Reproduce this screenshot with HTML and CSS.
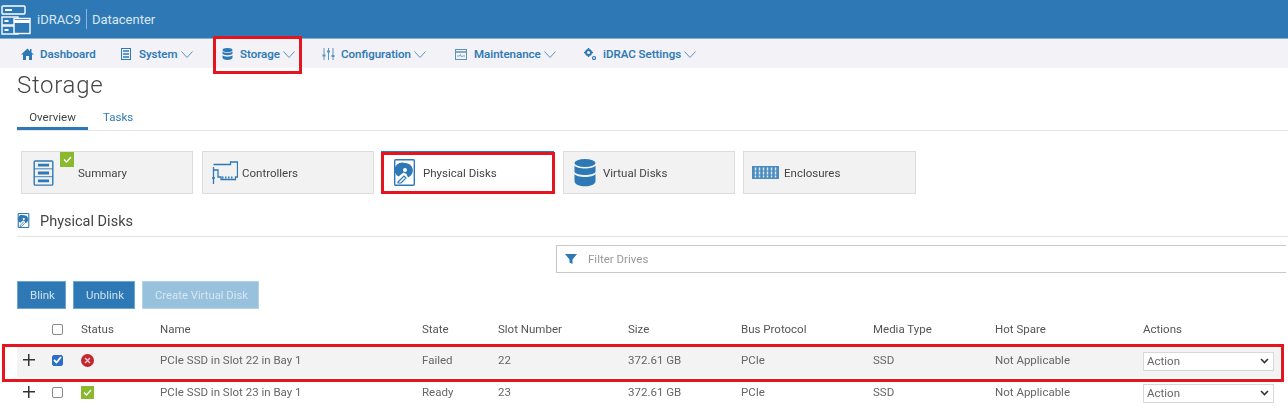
FILE: index.html
```html
<!DOCTYPE html>
<html>
<head>
    <title>Storage - iDRAC9</title>
    <link rel="stylesheet" href="styles.css">
</head>
<body>
    <header class="topbar">
        <svg class="logo" width="32" height="34" viewBox="0 0 32 34" fill="none" stroke="#fff" stroke-width="1.4">
            <rect x="2" y="4" width="23" height="8" rx="1"/>
            <rect x="2" y="15" width="16" height="8"/>
            <rect x="2" y="24" width="16" height="8"/>
            <rect x="14" y="16.500" width="16" height="15" fill="#2e79b5"/>
            <path d="M14 19.500h16" stroke-width="3"/>
            <path d="M5 8h7M4.500 19h4M4.500 28h4" stroke-width="2"/>
        </svg>
        <span class="product">iDRAC9</span>
        <span class="product-sep"></span>
        <span class="product">Datacenter</span>
    </header>

    <nav class="nav">
        <a class="nav-item nav-dash">
            <svg width="13" height="12" viewBox="0 0 13 12" fill="#2e79b5"><path d="M6.500 .5 0 6.500h2V12h3V8h3v4h3V6.500h2L10.500 4.600V1H9v2.200z"/></svg>
            Dashboard
        </a>
        <a class="nav-item nav-system">
            <svg width="10" height="12" viewBox="0 0 10 12" fill="none" stroke="#2e79b5"><rect x=".5" y=".5" width="9" height="11"/><path d="M2 3h6M2 6h6M2 9h6" stroke-width="1.500"/></svg>
            System
            <svg class="chev" width="12" height="7" viewBox="0 0 12 7"><path d="M.5.500l5.500 6 5.500-6"/></svg>
        </a>
        <a class="nav-item nav-storage">
            <svg width="11" height="12" viewBox="0 0 11 12" fill="#2e79b5"><ellipse cx="5.500" cy="2" rx="5" ry="2"/><path d="M.5 3.500c1 1.800 9 1.800 10 0v2.300c-1 1.800-9 1.800-10 0zM.5 7.300c1 1.800 9 1.800 10 0V10c-1 2.600-9 2.600-10 0z"/></svg>
            Storage
            <svg class="chev" width="12" height="7" viewBox="0 0 12 7"><path d="M.5.500l5.500 6 5.500-6"/></svg>
        </a>
        <a class="nav-item nav-config">
            <svg width="13" height="12" viewBox="0 0 13 12" fill="none" stroke="#5c93bd"><path d="M2 0v12M6.500 0v12M11 0v12"/><path d="M.5 7.500h3M5 3.500h3M9.500 8h3" stroke-width="2"/></svg>
            Configuration
            <svg class="chev" width="12" height="7" viewBox="0 0 12 7"><path d="M.5.500l5.500 6 5.500-6"/></svg>
        </a>
        <a class="nav-item nav-maint">
            <svg width="12" height="11" viewBox="0 0 12 11" fill="none" stroke="#5c93bd"><rect x=".5" y=".5" width="11" height="10"/><path d="M.5 3h11" stroke-width="1.500"/><path d="M2 7h2.500l1-1.500 1 2.500 1-1H10" stroke-width=".8"/></svg>
            Maintenance
            <svg class="chev" width="12" height="7" viewBox="0 0 12 7"><path d="M.5.500l5.500 6 5.500-6"/></svg>
        </a>
        <a class="nav-item nav-settings">
            <svg width="12" height="12" viewBox="0 0 12 12" fill="none" stroke="#2e79b5"><circle cx="4.500" cy="4.500" r="2.500" stroke-width="2"/><path d="M4.500 0v2M4.500 7v2M0 4.500h2M7 4.500h2" stroke-width="1.500"/><circle cx="10" cy="10" r="1.500" stroke-width="1.200"/></svg>
            iDRAC Settings
            <svg class="chev" width="12" height="7" viewBox="0 0 12 7"><path d="M.5.500l5.500 6 5.500-6"/></svg>
        </a>
    </nav>

    <main class="page">
        <h1 class="title">Storage</h1>

        <div class="tabs">
            <a class="tab tab-active">Overview</a>
            <a class="tab">Tasks</a>
        </div>

        <div class="tiles">
            <a class="tile tile-summary">
                <svg class="tile-icon" width="21" height="26" viewBox="0 0 22 28" fill="none" stroke="#2e79b5"><rect x="1" y="1" width="20" height="26" rx="1" stroke-width="1.500"/><path d="M1 9.500h20M1 18h20"/><path d="M5 5.500h12M5 14h12M5 22.500h12" stroke-width="3"/></svg>
                <span class="tile-check">
                    <svg width="9" height="7" viewBox="0 0 9 7" fill="none" stroke="#fff" stroke-width="1.300"><path d="M1 3.500l2.500 2.500L8 1"/></svg>
                </span>
                <span class="tile-label">Summary</span>
            </a>
            <a class="tile tile-controllers">
                <svg class="tile-icon" width="26" height="23" viewBox="0 0 26 23" fill="none" stroke="#2e79b5" stroke-width="1.300"><path d="M1.500 6v17M0 17h3"/><path d="M1.500 3.500h17v-2.500h7v15h-2v2.500H9V16H6V9H1.500"/><path d="M10 16.500h12" stroke-width="2" stroke-dasharray="1.500 1.500"/></svg>
                <span class="tile-label">Controllers</span>
            </a>
            <a class="tile tile-physical">
                <svg class="tile-icon" width="21" height="27" viewBox="0 0 21 27"><rect x=".7" y=".7" width="19.600" height="25.600" rx="1" fill="#fff" stroke="#2e79b5" stroke-width="1.400"/><path d="M11 4a7.500 7.500 0 0 1 3 14.500l-1.500-3.500-3-1.500-5 4A7.500 7.500 0 0 1 11 4z" fill="#2e79b5"/><circle cx="11" cy="11" r="2" fill="#fff"/><path d="M4 23l6-6 2 2-5 5H4z" fill="none" stroke="#2e79b5" stroke-width="1.200"/></svg>
                <span class="tile-label">Physical Disks</span>
            </a>
            <a class="tile tile-virtual">
                <svg class="tile-icon" width="22" height="28" viewBox="0 0 21 28" fill="#2e79b5"><ellipse cx="10.500" cy="4" rx="10.500" ry="4"/><path d="M0 6.500c2 4 19 4 21 0V13c-2 4-19 4-21 0zM0 15c2 4 19 4 21 0v7c0 7-21 7-21 0z"/></svg>
                <span class="tile-label">Virtual Disks</span>
            </a>
            <a class="tile tile-enclosures">
                <svg class="tile-icon" width="27" height="13" viewBox="0 0 27 13"><rect width="27" height="13" fill="#4a8cc0"/><path d="M3.500 1.500v10M7.500 1.500v10M11.500 1.500v10M15.500 1.500v10M19.500 1.500v10M23.500 1.500v10" stroke="#dce8f2" stroke-width="1.500" stroke-dasharray="3 1"/></svg>
                <span class="tile-label">Enclosures</span>
            </a>
        </div>

        <h2 class="section-title">
            <svg width="13" height="15" viewBox="0 0 21 27"><rect x="1" y="1" width="19" height="25" rx="1" fill="#fff" stroke="#2e79b5" stroke-width="2"/><path d="M11 4a7.500 7.500 0 0 1 3 14.500l-1.500-3.500-3-1.500-5 4A7.500 7.500 0 0 1 11 4z" fill="#2e79b5"/><circle cx="11" cy="11" r="2" fill="#fff"/><path d="M4 23l6-6 2 2-5 5H4z" fill="none" stroke="#2e79b5" stroke-width="1.500"/></svg>
            Physical Disks
        </h2>

        <div class="filter">
            <svg width="12" height="12" viewBox="0 0 12 12" fill="#2e79b5"><path d="M0 1h12L7.500 6.500V11l-3-1.500v-3z"/></svg>
            <span>Filter Drives</span>
        </div>

        <div class="actions">
            <button class="btn">Blink</button>
            <button class="btn">Unblink</button>
            <button class="btn btn-disabled">Create Virtual Disk</button>
        </div>

        <div class="grid grid-head">
            <span></span>
            <span><i class="check"></i></span>
            <span>Status</span>
            <span>Name</span>
            <span>State</span>
            <span>Slot Number</span>
            <span>Size</span>
            <span>Bus Protocol</span>
            <span>Media Type</span>
            <span>Hot Spare</span>
            <span>Actions</span>
        </div>

        <div class="grid row row-selected">
            <span class="plus"></span>
            <span><i class="check check-on"><svg width="9" height="8" viewBox="0 0 9 8" fill="none" stroke="#fff" stroke-width="1.800"><path d="M1 4l2.500 2.500L8 1"/></svg></i></span>
            <span><i class="status status-bad"><svg width="7" height="7" viewBox="0 0 7 7" stroke="#f3c9cd" stroke-width="1.500"><path d="M1 1l5 5M6 1L1 6"/></svg></i></span>
            <span>PCIe SSD in Slot 22 in Bay 1</span>
            <span>Failed</span>
            <span>22</span>
            <span>372.61 GB</span>
            <span>PCIe</span>
            <span>SSD</span>
            <span>Not Applicable</span>
            <span class="select">Action<svg width="9" height="6" viewBox="0 0 9 6" fill="none" stroke="#333" stroke-width="1.600"><path d="M1 1l3.500 3.500L8 1"/></svg></span>
        </div>

        <div class="grid row">
            <span class="plus"></span>
            <span><i class="check"></i></span>
            <span><i class="status status-ok"><svg width="9" height="7" viewBox="0 0 9 7" fill="none" stroke="#fff" stroke-width="1.300"><path d="M1 3.500l2.500 2.500L8 1"/></svg></i></span>
            <span>PCIe SSD in Slot 23 in Bay 1</span>
            <span>Ready</span>
            <span>23</span>
            <span>372.61 GB</span>
            <span>PCIe</span>
            <span>SSD</span>
            <span>Not Applicable</span>
            <span class="select">Action<svg width="9" height="6" viewBox="0 0 9 6" fill="none" stroke="#333" stroke-width="1.600"><path d="M1 1l3.500 3.500L8 1"/></svg></span>
        </div>
    </main>

    <div class="mark mark-nav"></div>
    <div class="mark mark-tile"></div>
    <div class="mark mark-row"></div>
</body>
</html>
```

FILE: styles.css
```css
html {
    box-sizing: border-box;
}

body {
    margin: 0;
    position: relative;
    height: 408px;
    overflow: hidden;
    background: #fff;
    font-family: Roboto, "Liberation Sans", sans-serif;
    color: #555;
    filter: blur(0.35px);
}

.topbar {
    height: 38px;
    border-bottom: 1px solid #7fb0d6;
    background: #2e79b5;
    display: flex;
    align-items: center;
    color: #dbe8f3;
    font-size: 13px;
}

.logo {
    margin-right: 5px;
}

.product-sep {
    width: 1px;
    height: 20px;
    margin: 0 5px;
    background: #8ab6d8;
}

.nav {
    height: 28px;
    padding: 1px 0 0 21px;
    background: #f3f3f7;
    display: flex;
    align-items: center;
    font-size: 11.5px;
    font-weight: 500;
    color: #2e79b5;
    -webkit-text-stroke: 0.1px #2e79b5;
}

.nav-item {
    display: flex;
    align-items: center;
}

.nav-item svg {
    margin-right: 7px;
}

.nav-item .chev {
    margin: 0 0 0 3px;
    fill: none;
    stroke: #5c93bd;
}

.nav-dash { width: 100px; }
.nav-dash svg { margin-right: 6px; }
.nav-system { width: 101px; }
.nav-system svg:first-child { margin-right: 8px; }
.nav-storage { width: 100px; }
.nav-config { width: 133px; }
.nav-config svg:first-child { margin-right: 6px; }
.nav-maint { width: 129px; }

.page {
    padding: 0 0 0 17px;
}

.title {
    margin: 0;
    height: 36px;
    font-size: 24px;
    font-weight: 300;
    line-height: 34px;
    color: #444;
    letter-spacing: 0.7px;
}

.tabs {
    height: 26px;
    display: flex;
    border-bottom: 1px solid #e4e4e4;
    font-size: 11.5px;
}

.tab {
    height: 24px;
    line-height: 26px;
    text-align: center;
    color: #2e79b5;
    margin-left: 15px;
}

.tab-active {
    width: 71px;
    height: 23px;
    margin-left: 0;
    color: #444;
    border-bottom: 3px solid #2e79b5;
}

.tiles {
    display: flex;
    gap: 9px;
    margin: 20px 0 0 4px;
}

.tile {
    width: 172px;
    height: 43px;
    box-sizing: border-box;
    border: 1.5px solid #dcdcdc;
    background: #f2f2f2;
    display: flex;
    align-items: center;
    position: relative;
    font-size: 11.5px;
    color: #444;
}

.tile-summary .tile-icon { margin-left: 11px; }
.tile-summary .tile-label { margin-left: 24px; }

.tile-check {
    position: absolute;
    left: 38px;
    top: 0;
    width: 14px;
    height: 15px;
    background: #8ab82e;
    display: flex;
    align-items: center;
    justify-content: center;
}

.tile-controllers .tile-icon { margin-left: 9px; }
.tile-controllers .tile-label { margin-left: 4px; }

.tile-physical {
    background: #fff;
    border-color: #2e79b5;
    width: 173px;
    margin-left: -2px;
}

.tile-physical .tile-icon { margin-left: 12px; }
.tile-physical .tile-label { margin-left: 8px; }

.tile-virtual .tile-icon { margin-left: 10px; }
.tile-virtual .tile-label { margin-left: 7px; }

.tile-enclosures { width: 173px; margin-left: -1px; }
.tile-enclosures .tile-icon { margin-left: 8px; }
.tile-enclosures .tile-label { margin-left: 5px; }

.section-title {
    margin: 18px 0 0;
    height: 24px;
    border-bottom: 1px solid #e4e4e4;
    display: flex;
    align-items: flex-start;
    gap: 10px;
    font-size: 14.5px;
    font-weight: 400;
    line-height: 20px;
    color: #444;
}

.section-title svg {
    margin-top: 1px;
}

.filter {
    margin: 8px 2px 0 539px;
    height: 26px;
    border: 1px solid #c8c8c8;
    border-right: 0;
    display: flex;
    align-items: center;
    gap: 11px;
    padding-left: 8px;
    font-size: 11.5px;
    color: #999;
}

.actions {
    display: flex;
    gap: 7px;
    margin-top: 8px;
}

.btn {
    height: 28px;
    padding: 0 10px 0 12px;
    border: 1px solid #6ea6d2;
    background: #2e79b5;
    color: #cfe0ef;
    font-family: inherit;
    font-size: 11.5px;
}

.btn-disabled {
    padding: 0 10px 0 12px;
    background: #97c1dc;
    border-color: #b5d3e6;
    color: #d7e6f1;
    font-size: 11.3px;
}

.grid {
    display: grid;
    grid-template-columns: 35px 29px 79px 262px 76px 130px 113px 132px 122px 148px 131px;
    align-items: center;
    width: 1263px;
    font-size: 11.5px;
}

.grid-head {
    height: 36px;
    padding-top: 2px;
    color: #555;
}

.row {
    height: 28px;
    color: #666;
}

.row-selected {
    height: 26px;
    padding-bottom: 4px;
    margin-bottom: 1px;
    background: #f3f3f4;
}

.plus {
    width: 12px;
    height: 12px;
    margin-left: 6px;
    background:
        linear-gradient(#333, #333) center / 12px 1.5px no-repeat,
        linear-gradient(#333, #333) center / 1.5px 12px no-repeat;
}

.check {
    display: flex;
    align-items: center;
    justify-content: center;
    width: 9px;
    height: 9px;
    border: 1px solid #888;
    border-radius: 2px;
    background: #fff;
}

.check-on {
    background: #2a6fc9;
    border-color: #2a6fc9;
}

.status {
    display: flex;
    align-items: center;
    justify-content: center;
    width: 13px;
    height: 13px;
}

.status-bad {
    background: #c4252f;
    border-radius: 50%;
}

.status-ok {
    background: #8ab82e;
}

.select {
    height: 19px;
    box-sizing: border-box;
    border: 1px solid #d8d8d8;
    background: #fff;
    display: flex;
    align-items: center;
    justify-content: space-between;
    padding: 0 4px 0 3px;
    margin-top: 2px;
}

.mark {
    position: absolute;
    box-sizing: border-box;
    border: 3px solid #e5151f;
}

.mark-nav {
    left: 213px;
    top: 36px;
    width: 89px;
    height: 38px;
}

.mark-tile {
    left: 381px;
    top: 152px;
    width: 174px;
    height: 42px;
}

.mark-row {
    left: 2px;
    top: 344px;
    width: 1282px;
    height: 38px;
}
```
